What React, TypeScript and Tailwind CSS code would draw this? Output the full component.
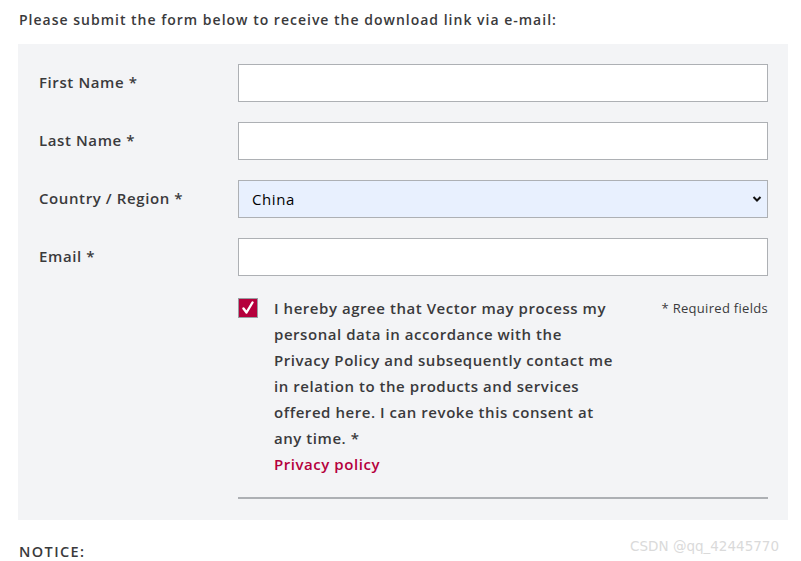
import React from 'react';

const fields = ['First Name *', 'Last Name *', 'Country / Region *', 'Email *'];

const consent = [
  'I hereby agree that Vector may process my',
  'personal data in accordance with the',
  'Privacy Policy and subsequently contact me',
  'in relation to the products and services',
  'offered here. I can revoke this consent at',
  'any time. *',
];

export default function App() {
  return (
    <div className="w-[801px] h-[561px] bg-white overflow-hidden font-['Open_Sans','Noto_Sans',sans-serif] text-[#3a3a3c]">
      <div className="px-[18px] pt-[10px]">
        <p className="pl-px text-[14px] font-semibold leading-[20px] tracking-[1px] whitespace-nowrap">
          Please submit the form below to receive the download link via e-mail:
        </p>
        <div className="mt-[14px] w-[770px] bg-[#f3f4f6] pt-5 pb-[21px] pl-[21px] pr-5">
          <div className="flex flex-col gap-5">
            {fields.map((label) => (
              <div key={label} className="flex items-center">
                <div className="w-[199px] text-[15px] font-semibold tracking-[0.6px] -mt-[1px]">{label}</div>
                {label.startsWith('Country') ? (
                  <div className="w-[530px] h-[38px] border border-[#adb0b4] bg-[#e8f0fe] flex items-center justify-between pl-[13px] pr-[5px]">
                    <span className="text-[15px] text-black tracking-[0.6px]">China</span>
                    <svg width="10" height="8" viewBox="0 0 10 8">
                      <path d="M1.5 2 L5 5.5 L8.5 2" fill="none" stroke="#111" strokeWidth="2" />
                    </svg>
                  </div>
                ) : (
                  <div className="w-[530px] h-[38px] border border-[#adb0b4] bg-white" />
                )}
              </div>
            ))}
          </div>
          <div className="ml-[199px] mt-[19px] flex">
            <div className="w-5 h-5 mt-[3px] border border-[#9a9ea3] bg-[#b5003c] flex items-center justify-center shrink-0">
              <svg width="14" height="14" viewBox="0 0 14 14">
                <path d="M2.5 7.5 L5.5 11.5 L11.5 1.5" fill="none" stroke="#fff" strokeWidth="2.4" strokeLinecap="round" strokeLinejoin="round" />
              </svg>
            </div>
            <div className="ml-4 text-[15px] font-semibold leading-[26px] tracking-[0.55px] whitespace-nowrap">
              {consent.map((line) => (
                <div key={line}>{line}</div>
              ))}
              <div className="text-[#b5003c]">Privacy policy</div>
            </div>
            <div className="flex-1 text-right text-[13px] leading-[26px] tracking-[0.3px]">
              * Required fields
            </div>
          </div>
          <div className="ml-[199px] mt-5 w-[530px] h-[2px] bg-[#adb0b4]" />
        </div>
        <div className="flex justify-between items-center mt-[21px]">
          <p className="pl-px text-[14.5px] font-semibold tracking-[1.4px]">NOTICE:</p>
          <span className="text-[13.5px] text-[#dadada] mr-[4px] -mt-[12px]" style={{ fontFamily: '"DejaVu Sans", sans-serif' }}>
            CSDN @qq_42445770
          </span>
        </div>
      </div>
    </div>
  );
}
